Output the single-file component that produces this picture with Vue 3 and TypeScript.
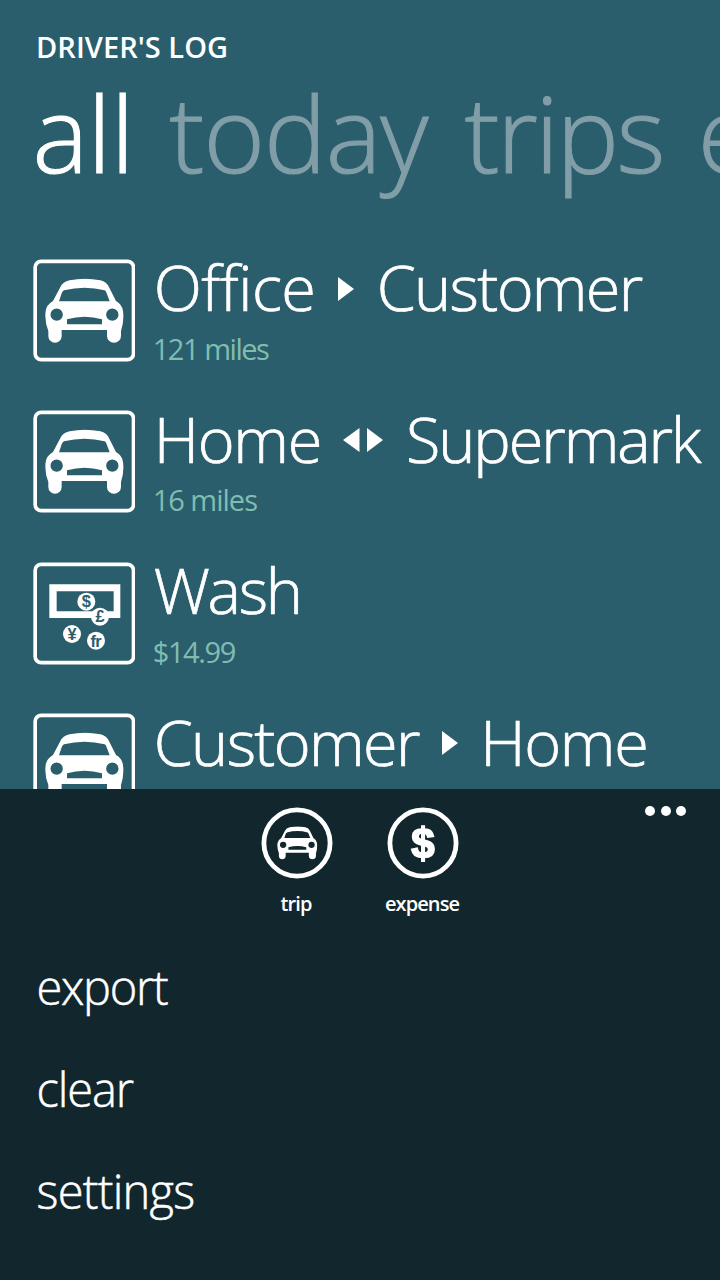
<script setup lang="ts">
interface Word { text: string; track: number }
interface Entry {
  icon: 'car' | 'money'
  from: Word
  link?: 'one-way' | 'round-trip'
  to?: Word
  note?: Word
}

const tabs: (Word & { id: string })[] = [
  { id: 'all', text: 'all', track: -0.6 },
  { id: 'today', text: 'today', track: -0.95 },
  { id: 'trips', text: 'trips', track: -2.6 },
  { id: 'expenses', text: 'expenses', track: -1 },
]

const entries: Entry[] = [
  {
    icon: 'car',
    from: { text: 'Office', track: -0.5 },
    link: 'one-way',
    to: { text: 'Customer', track: -1.7 },
    note: { text: '121 miles', track: -1.45 },
  },
  {
    icon: 'car',
    from: { text: 'Home', track: -1.3 },
    link: 'round-trip',
    to: { text: 'Supermark', track: -2.1 },
    note: { text: '16 miles', track: -1 },
  },
  {
    icon: 'money',
    from: { text: 'Wash', track: -2.3 },
    note: { text: '$14.99', track: -1.35 },
  },
  {
    icon: 'car',
    from: { text: 'Customer', track: -1.65 },
    link: 'one-way',
    to: { text: 'Home', track: -1.3 },
  },
]

const menu: Word[] = [
  { text: 'export', track: -1.3 },
  { text: 'clear', track: -1.1 },
  { text: 'settings', track: -0.75 },
]

const tracking = (w: Word) => ({ letterSpacing: w.track + 'px' })
</script>

<template>
  <div class="phone">
    <svg class="defs" width="0" height="0" aria-hidden="true">
      <symbol id="car" viewBox="55 78 238 196">
        <path
          fill-rule="evenodd"
          d="M80 146L101 106Q109 88 130 84Q175 75 222 84Q241 88 249 106L269 146Q288 157 290 176Q294 206 284 236V251A21 20.500 0 0 1 242 251V233H106V251A20 20.500 0 0 1 66 251V236Q54 206 58 176Q60 158 80 146ZM113 114Q108 117 106 123L98 147H250L241 123Q239 116 235 114Q175 98 113 114ZM72.500 187a18.500 18.500 0 1 0 37 0a18.500 18.500 0 1 0 -37 0ZM239.500 187a18.500 18.500 0 1 0 37 0a18.500 18.500 0 1 0 -37 0ZM122 201V216H227V201Q175 186 122 201Z"
        />
      </symbol>
    </svg>

    <header class="title">DRIVER'S LOG</header>
    <nav class="tabs">
      <span
        v-for="(tab, i) in tabs"
        :key="tab.id"
        :class="['tab', tab.id, { active: i === 0 }]"
        :style="tracking(tab)"
      >{{ tab.text }}</span>
    </nav>

    <main class="list">
      <article v-for="(entry, i) in entries" :key="i" class="entry">
        <svg class="tile" viewBox="20 20 308 308">
          <rect class="frame" x="26.500" y="27" width="295" height="295" rx="18" />
          <use v-if="entry.icon === 'car'" href="#car" x="55" y="78" width="238" height="196" />
          <g v-else>
            <path fill-rule="evenodd" d="M69 87H282V188H69ZM91 108V168H262V108Z" />
            <circle cx="180" cy="139" r="27" />
            <circle cx="221" cy="184" r="27" />
            <circle cx="137" cy="236" r="27" />
            <circle cx="209" cy="256" r="27" />
            <text class="coin" x="180" y="156">$</text>
            <text class="coin" x="221" y="201">£</text>
            <text class="coin" x="137" y="254">¥</text>
            <text class="coin fr" x="208" y="274">fr</text>
          </g>
        </svg>
        <div class="body">
          <div class="route">
            <span :style="tracking(entry.from)">{{ entry.from.text }}</span>
            <svg v-if="entry.link === 'one-way'" class="one-way" viewBox="0 0 16 24">
              <path d="M0 0L16 12L0 24Z" />
            </svg>
            <svg v-if="entry.link === 'round-trip'" class="round-trip" viewBox="0 0 40 24">
              <path d="M16.500 0V24L0 12ZM24 0L40 12L24 24Z" />
            </svg>
            <span v-if="entry.to" :style="tracking(entry.to)">{{ entry.to.text }}</span>
          </div>
          <div v-if="entry.note" class="note" :style="tracking(entry.note)">{{ entry.note.text }}</div>
        </div>
      </article>
    </main>

    <footer class="appbar">
      <div class="actions">
        <div class="action">
          <svg class="round" viewBox="0 0 72 72">
            <circle class="ring" cx="36" cy="36" r="33.100" />
            <use class="soft" href="#car" x="16" y="19.300" width="40.500" height="33.400" />
          </svg>
          <span>trip</span>
        </div>
        <div class="action">
          <svg class="round" viewBox="0 0 72 72">
            <circle class="ring" cx="36" cy="36" r="33.100" />
            <text class="dollar soft" x="36" y="50.500">$</text>
          </svg>
          <span>expense</span>
        </div>
      </div>
      <div class="more"><i /><i /><i /></div>
      <ul class="menu">
        <li v-for="item in menu" :key="item.text" :style="tracking(item)">{{ item.text }}</li>
      </ul>
    </footer>
  </div>
</template>

<style>
html,
body {
  margin: 0;
  overflow: hidden;
  background: #2b5e6c;
}
</style>

<style scoped>
.phone {
  width: 720px;
  height: 1280px;
  display: flex;
  flex-direction: column;
  overflow: hidden;
  position: relative;
  background: #2b5e6c;
  color: #fff;
  font-family: 'Open Sans', 'Noto Sans', sans-serif;
  font-weight: 300;
}
.defs {
  position: absolute;
}
svg {
  fill: #fff;
  flex: none;
}
.title {
  flex: none;
  margin: 27px 0 0 36px;
  height: 36px;
  font-size: 29px;
  line-height: 40px;
  font-weight: 600;
  letter-spacing: 0.05px;
}
.tabs {
  flex: none;
  display: flex;
  width: 720px;
  height: 140px;
  padding-left: 32.500px;
  box-sizing: border-box;
  font-size: 105px;
  line-height: 140px;
  white-space: nowrap;
}
.tab {
  flex: none;
  color: #819ea8;
  -webkit-text-stroke: 1.100px currentColor;
}
.tab.active {
  color: #fff;
}
.tab.today {
  margin-left: 35.500px;
}
.tab.trips {
  margin-left: 37px;
}
.tab.expenses {
  margin-left: 35px;
}
.list {
  flex: none;
  height: 586px;
  box-sizing: border-box;
  padding: 55.900px 0 0 32.500px;
  overflow: hidden;
}
.entry {
  display: flex;
  height: 151.500px;
}
.tile {
  width: 102.670px;
  height: 102.670px;
}
.frame {
  fill: none;
  stroke: #fff;
  stroke-width: 11;
}
.coin {
  fill: #2b5e6c;
  font: 700 49px 'Liberation Sans', Arial, sans-serif;
  text-anchor: middle;
}
.coin.fr {
  letter-spacing: -2px;
}
.body {
  margin: -6.500px 0 0 18.500px;
  white-space: nowrap;
}
.route {
  display: flex;
  align-items: center;
  height: 70px;
  font-size: 63px;
  line-height: 70px;
  -webkit-text-stroke: 0.700px currentColor;
}
.one-way {
  width: 16px;
  height: 24px;
  margin: 3px 22.500px 0 22.800px;
}
.round-trip {
  width: 40px;
  height: 24px;
  margin: 3px 23px 0 22px;
}
.note {
  margin: 8.500px 0 0 -1px;
  font-size: 29px;
  line-height: 36px;
  font-weight: 400;
  color: #80bdb1;
}
.appbar {
  flex: 1;
  position: relative;
  background: #12262d;
}
.actions {
  display: flex;
  justify-content: center;
  padding-top: 18px;
}
.action {
  width: 126px;
  display: flex;
  flex-direction: column;
  align-items: center;
  font-size: 20px;
  line-height: 28px;
  font-weight: 600;
  letter-spacing: -0.9px;
}
.action span {
  margin: 11px 0 0 -2px;
}
.round {
  width: 72px;
  height: 72px;
}
.ring {
  fill: none;
  stroke: #fff;
  stroke-width: 4.800;
}
.soft {
  filter: blur(0.5px);
}
.dollar {
  font: 700 42px 'Liberation Sans', Arial, sans-serif;
  letter-spacing: 0;
  text-anchor: middle;
  stroke: #fff;
  stroke-width: 1.800;
}
.more {
  position: absolute;
  top: 17px;
  right: 34px;
  display: flex;
  gap: 5.500px;
}
.more i {
  width: 10px;
  height: 10px;
  border-radius: 50%;
  background: #fff;
}
.menu {
  list-style: none;
  margin: 18px 0 0;
  padding: 0 0 0 36.500px;
}
.menu li {
  height: 102px;
  font-size: 47px;
  line-height: 102px;
  -webkit-text-stroke: 0.500px currentColor;
}
</style>
